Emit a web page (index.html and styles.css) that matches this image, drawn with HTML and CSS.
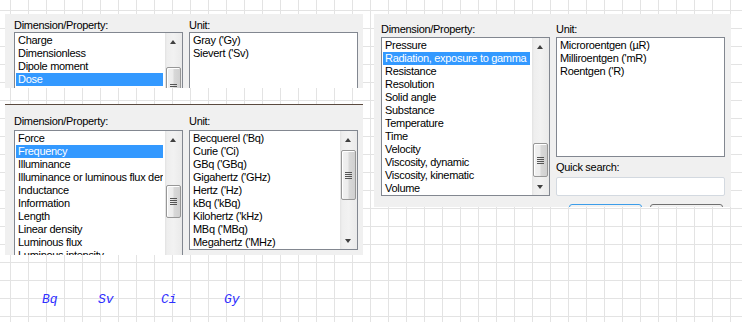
FILE: index.html
```html
<!DOCTYPE html>
<html>
<head>
<meta charset="utf-8">
<link rel="stylesheet" href="styles.css">
</head>
<body>
<div class="canvas">
  <div class="left-col">
    <section class="dlg dlg-a">
      <div class="cols">
        <div class="col">
          <div class="lbl">Dimension/Property:</div>
          <div class="listbox lb-tall">
            <ul class="items">
              <li>Charge</li>
              <li>Dimensionless</li>
              <li>Dipole moment</li>
              <li class="sel">Dose</li>
              <li>Electric capacitance</li>
            </ul>
            <div class="sbar">
              <span class="arr up"></span>
              <span class="thumb" style="margin-top:17px;height:40px"><i></i><i></i><i></i><i></i></span>
            </div>
          </div>
        </div>
        <div class="col">
          <div class="lbl">Unit:</div>
          <div class="listbox lb-tall">
            <ul class="items">
              <li>Gray ('Gy)</li>
              <li>Sievert ('Sv)</li>
            </ul>
          </div>
        </div>
      </div>
    </section>

    <section class="dlg dlg-b">
      <div class="cols">
        <div class="col">
          <div class="lbl">Dimension/Property:</div>
          <div class="listbox lb-tall">
            <ul class="items">
              <li>Force</li>
              <li class="sel">Frequency</li>
              <li>Illuminance</li>
              <li>Illuminance or luminous flux density</li>
              <li>Inductance</li>
              <li>Information</li>
              <li>Length</li>
              <li>Linear density</li>
              <li>Luminous flux</li>
              <li>Luminous intensity</li>
            </ul>
            <div class="sbar">
              <span class="arr up"></span>
              <span class="thumb" style="margin-top:37px;height:33px"><i></i><i></i><i></i><i></i></span>
            </div>
          </div>
        </div>
        <div class="col">
          <div class="lbl">Unit:</div>
          <div class="listbox lb-unit">
            <ul class="items">
              <li>Becquerel ('Bq)</li>
              <li>Curie ('Ci)</li>
              <li>GBq ('GBq)</li>
              <li>Gigahertz ('GHz)</li>
              <li>Hertz ('Hz)</li>
              <li>kBq ('kBq)</li>
              <li>Kilohertz ('kHz)</li>
              <li>MBq ('MBq)</li>
              <li>Megahertz ('MHz)</li>
            </ul>
            <div class="sbar">
              <span class="arr up"></span>
              <span class="thumb" style="margin-top:2px;height:50px"><i></i><i></i><i></i><i></i></span>
              <span class="fill"></span>
              <span class="arr down"></span>
            </div>
          </div>
        </div>
      </div>
    </section>
  </div>

  <section class="dlg dlg-c">
    <div class="cols">
      <div class="col">
        <div class="lbl">Dimension/Property:</div>
        <div class="listbox lb-main">
          <ul class="items">
            <li>Pressure</li>
            <li class="sel">Radiation, exposure to gamma</li>
            <li>Resistance</li>
            <li>Resolution</li>
            <li>Solid angle</li>
            <li>Substance</li>
            <li>Temperature</li>
            <li>Time</li>
            <li>Velocity</li>
            <li>Viscosity, dynamic</li>
            <li>Viscosity, kinematic</li>
            <li>Volume</li>
          </ul>
          <div class="sbar">
            <span class="arr up"></span>
            <span class="thumb" style="margin-top:88px;height:34px"><i></i><i></i><i></i><i></i></span>
            <span class="fill"></span>
            <span class="arr down"></span>
          </div>
        </div>
      </div>
      <div class="col">
        <div class="lbl">Unit:</div>
        <div class="listbox lb-unit">
          <ul class="items">
            <li>Microroentgen (µR)</li>
            <li>Milliroentgen ('mR)</li>
            <li>Roentgen ('R)</li>
          </ul>
        </div>
        <div class="lbl lbl-search">Quick search:</div>
        <div class="search"></div>
      </div>
    </div>
    <div class="buttons">
      <button class="btn btn-default">OK</button>
      <button class="btn">Cancel</button>
    </div>
  </section>
</div>

<div class="symbols">
  <span>Bq</span>
  <span>Sv</span>
  <span>Ci</span>
  <span>Gy</span>
</div>
</body>
</html>
```

FILE: styles.css
```css
html, body {
  margin: 0;
  padding: 0;
}

body {
  min-height: 322px;
  background-color: #ffffff;
  background-image:
    linear-gradient(#e3e3e3 1px, transparent 1px),
    linear-gradient(90deg, #e3e3e3 1px, transparent 1px);
  background-size: 18px 18px;
  background-position: 10px 10px;
  font-family: "Liberation Sans", Arial, sans-serif;
  font-size: 11px;
  letter-spacing: -0.3px;
  color: #000;
  overflow: hidden;
}

.canvas {
  display: flex;
  align-items: flex-start;
  padding-top: 14px;
  height: 241px;
}

.left-col {
  margin-left: 5px;
  width: 358px;
  display: flex;
  flex-direction: column;
  gap: 16px;
}

.dlg {
  background: #f0f0f0;
  box-sizing: border-box;
  overflow: hidden;
}

.dlg-a {
  height: 74px;
  padding: 4px 5px 0 9px;
}

.dlg-b {
  height: 151px;
  border-top: 1px solid #5b4a3f;
  padding: 9px 5px 0 9px;
}

.dlg-b .lbl {
  height: 16px;
}

.dlg-c {
  margin-left: 11px;
  width: 357px;
  height: 193px;
  padding: 8px 6px 0 7px;
}

.dlg-c .lbl {
  height: 15px;
}

.cols {
  display: flex;
  gap: 6px;
}

.col {
  width: 169px;
  display: flex;
  flex-direction: column;
}

.lbl {
  height: 14px;
  line-height: 14px;
  white-space: nowrap;
}

.dlg-c .lbl-search {
  height: 14px;
  margin-top: 3px;
  margin-bottom: 3px;
}

.listbox {
  box-sizing: border-box;
  border: 1px solid #828790;
  background: #fff;
  display: flex;
  overflow: hidden;
}

.lb-tall {
  height: 140px;
}

.lb-unit {
  height: 120px;
}

.lb-main {
  height: 159px;
}

.items {
  list-style: none;
  margin: 0;
  padding: 1px;
  flex: 1;
  min-width: 0;
  overflow: hidden;
}

.items li {
  height: 13px;
  line-height: 13px;
  padding-left: 2px;
  white-space: nowrap;
  overflow: hidden;
}

.items li.sel {
  background: #3399ff;
  color: #fff;
}

.sbar {
  width: 17px;
  flex: none;
  margin-left: 1px;
  display: flex;
  flex-direction: column;
  align-items: center;
  background: linear-gradient(90deg, #e2e2e2 0, #eeeeee 2px, #f2f2f2 50%, #eaeaea 100%);
}

.arr {
  width: 17px;
  height: 17px;
  flex: none;
  position: relative;
}

.arr::after {
  content: "";
  position: absolute;
  left: 5px;
  width: 0;
  height: 0;
  border-left: 3.5px solid transparent;
  border-right: 3.5px solid transparent;
}

.arr.up::after {
  top: 7px;
  border-bottom: 4px solid #404040;
}

.arr.down::after {
  top: 7px;
  border-top: 4px solid #404040;
}

.fill {
  flex: 1;
}

.thumb {
  box-sizing: border-box;
  width: 15px;
  flex: none;
  border: 1px solid #979797;
  border-radius: 2px;
  background: linear-gradient(90deg, #f1f1f1 0%, #ececec 45%, #d8d8d8 55%, #d0d0d0 100%);
  box-shadow: inset 1px 1px 0 #ffffff;
  display: flex;
  flex-direction: column;
  align-items: center;
  justify-content: center;
  gap: 1px;
}

.thumb i {
  display: block;
  width: 7px;
  height: 1px;
  background: #555;
}

.search {
  box-sizing: border-box;
  height: 19px;
  border: 1px solid #d3d9e0;
  border-radius: 2px;
  background: #fff;
}

.buttons {
  display: flex;
  justify-content: flex-end;
  gap: 8px;
  margin-top: 8px;
  padding-right: 2px;
}

.btn {
  box-sizing: border-box;
  width: 73px;
  height: 23px;
  border: 1px solid #707070;
  border-radius: 3px;
  background: linear-gradient(#f2f2f2, #dddddd);
  font: inherit;
  color: transparent;
  padding: 0;
}

.btn-default {
  border-color: #3c9de9;
}

.symbols {
  display: grid;
  grid-template-columns: 56px 63px 63px auto;
  padding-left: 42px;
  margin-top: 38px;
  font-family: "Liberation Mono", "Courier New", monospace;
  font-style: italic;
  font-size: 13px;
  line-height: 14px;
  letter-spacing: 0;
  color: #2f2fff;
}
```
